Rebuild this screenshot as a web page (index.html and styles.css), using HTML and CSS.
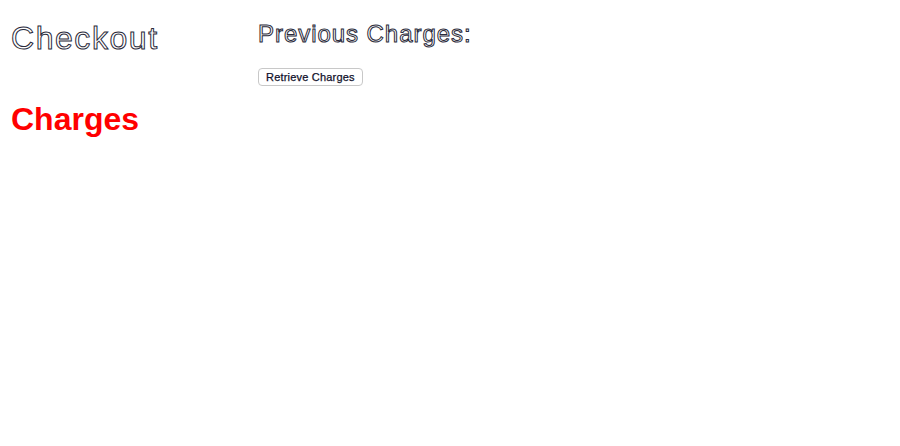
FILE: index.html
```html
<!DOCTYPE html>
<html>
<head>
<meta charset="utf-8">
<title>Checkout</title>
<link rel="stylesheet" href="styles.css">
</head>
<body>
<div class="page">
  <div class="left-col">
    <h1 class="title-outline">Checkout</h1>
    <h1 class="charges-title">Charges</h1>
  </div>
  <div class="right-col">
    <h2 class="subtitle-outline">Previous Charges:</h2>
    <div class="actions">
      <button class="btn" type="button">Retrieve Charges</button>
    </div>
  </div>
</div>
</body>
</html>
```
FILE: styles.css
```css
html, body {
  margin: 0;
  padding: 0;
  background: #ffffff;
}

body {
  font-family: "Liberation Sans", Arial, sans-serif;
}

.page {
  display: grid;
  grid-template-columns: 247px 1fr;
  padding: 20px 0 0 11px;
}

.left-col {
  display: flex;
  flex-direction: column;
  align-items: flex-start;
  gap: 44px;
}

.right-col {
  display: flex;
  flex-direction: column;
  align-items: flex-start;
  gap: 19px;
}

h1, h2 {
  margin: 0;
}

.title-outline {
  font-size: 32px;
  line-height: 37px;
  font-weight: normal;
  letter-spacing: 1.55px;
  color: #ffffff;
  -webkit-text-stroke: 1px #2a2a3a;
}

.charges-title {
  font-size: 32px;
  line-height: 37px;
  font-weight: bold;
  color: #ff0000;
}

.subtitle-outline {
  font-size: 24px;
  line-height: 28px;
  font-weight: normal;
  letter-spacing: 0.95px;
  color: #ffffff;
  -webkit-text-stroke: 1px #2a2a3a;
}

.btn {
  font-family: "Liberation Sans", Arial, sans-serif;
  font-size: 11px;
  line-height: 14px;
  letter-spacing: 0.2px;
  color: #10102a;
  -webkit-text-stroke: 0.25px #10102a;
  background: #ffffff;
  border: 1px solid #c8c8c8;
  border-radius: 4px;
  padding: 1px 7px;
  height: 18px;
  margin: 0;
}
```
